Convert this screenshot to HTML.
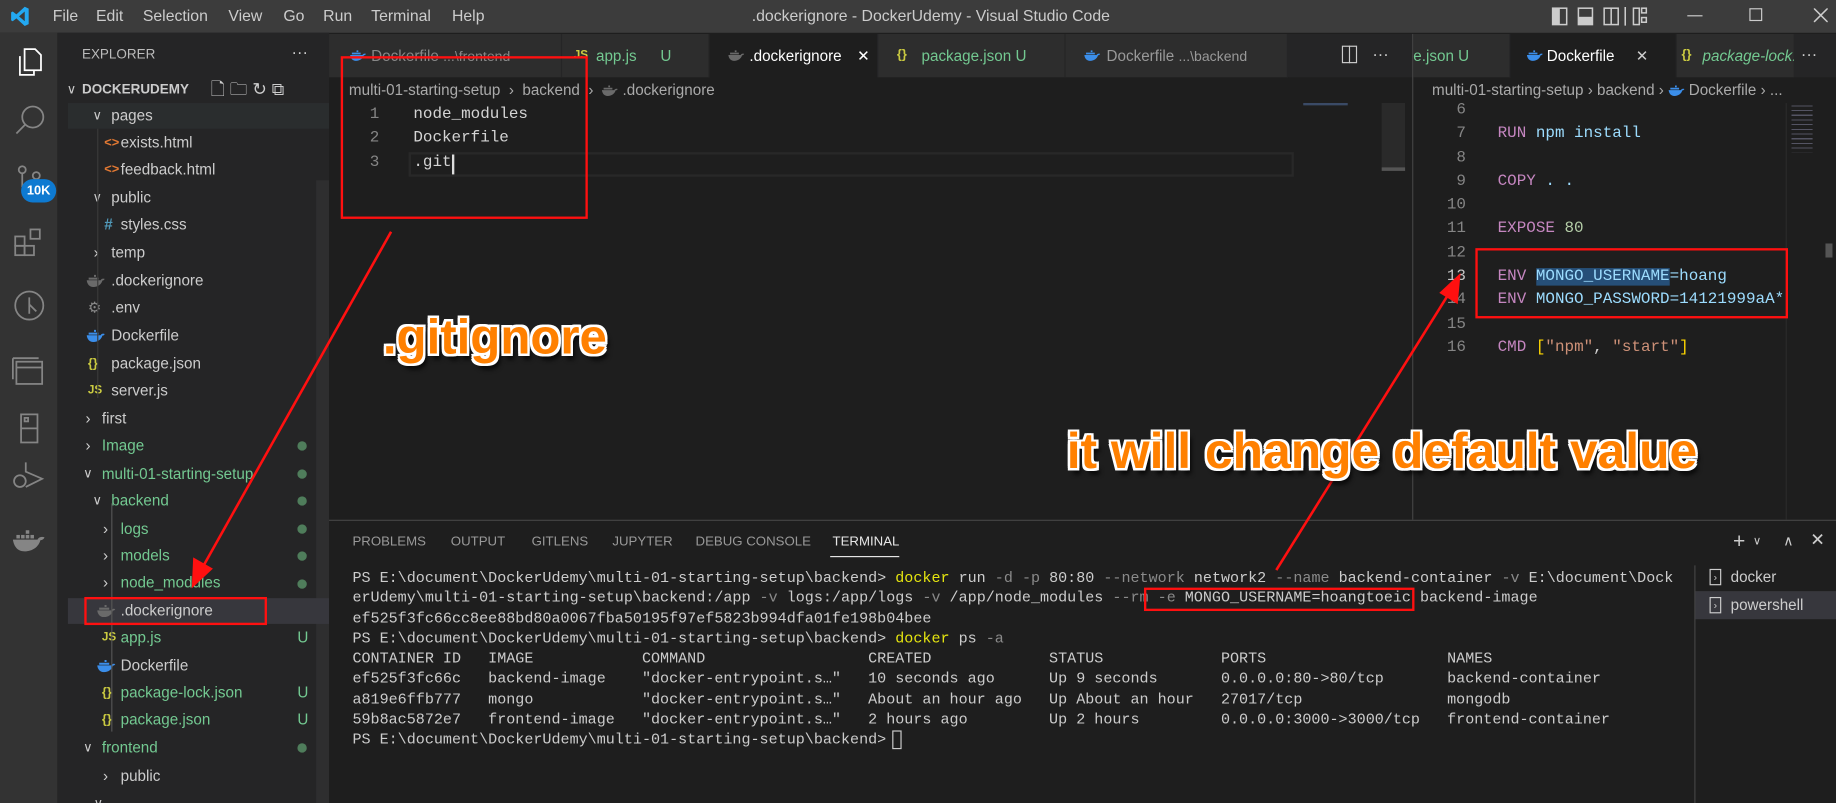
<!DOCTYPE html>
<html><head><meta charset="utf-8"><style>
*{margin:0;padding:0;box-sizing:border-box}
html,body{width:1836px;height:803px;overflow:hidden;background:#1e1e1e}
#w{position:absolute;left:0;top:0;width:1568px;height:686px;transform:scale(1.17092,1.17055);transform-origin:0 0;font-family:"Liberation Sans",sans-serif;color:#ccc;overflow:hidden;background:#1e1e1e}
.a{position:absolute;white-space:pre}
.sb .a{font-size:13px;line-height:22px}
.g{color:#73c991}
.dot{position:absolute;width:8px;height:8px;border-radius:50%;background:#4f7d5b}
.box{position:absolute;border:2.5px solid #ff1010}
.tab{position:absolute;top:29px;height:37px;background:#2d2d2d;border-right:1px solid #252526;font-size:13px;line-height:37px;white-space:nowrap;overflow:hidden}
.tab span{white-space:nowrap}
.code{font-family:"Liberation Mono",monospace;font-size:13.6px;line-height:20.3px}
.ln{color:#858585;text-align:right;width:30px}
.kw{color:#c586c0}.vr{color:#9cdcfe}.nm{color:#b5cea8}.st{color:#ce9178}.br{color:#ffd700}
.ann{position:absolute;font-family:"Liberation Sans",sans-serif;font-weight:bold;color:#ff8000;white-space:pre;
text-shadow:-2px -2px 0 #fff,2px -2px 0 #fff,-2px 2px 0 #fff,2px 2px 0 #fff,0 -2px 0 #fff,0 2px 0 #fff,-2px 0 0 #fff,2px 0 0 #fff,3px 5px 4px rgba(0,0,0,.8)}
.term{font-family:"Liberation Mono",monospace;font-size:12.88px;line-height:17.25px;color:#ccc}
.y{color:#e5e510}.d{color:#8a8a8a}
svg.wh{display:inline-block;vertical-align:middle}
</style></head><body><div id="w">

<!-- title bar -->
<div class="a" style="left:0;top:0;width:1568px;height:28px;background:#3c3c3c"></div>
<svg class="a" style="left:8px;top:5px" width="18" height="18" viewBox="0 0 24 24"><path fill="#23a9f2" d="M17.5 1 22 3.2v17.6L17.5 23 8 14.3 3.8 17.5 2 16.6V7.4l1.8-.9L8 9.7 17.5 1zM17.5 6.5 11 12l6.5 5.5z"/></svg>
<div class="a" style="left:45px;top:6px;font-size:13.5px">File</div>
<div class="a" style="left:82px;top:6px;font-size:13.5px">Edit</div>
<div class="a" style="left:122px;top:6px;font-size:13.5px">Selection</div>
<div class="a" style="left:195px;top:6px;font-size:13.5px">View</div>
<div class="a" style="left:242px;top:6px;font-size:13.5px">Go</div>
<div class="a" style="left:276px;top:6px;font-size:13.5px">Run</div>
<div class="a" style="left:317px;top:6px;font-size:13.5px">Terminal</div>
<div class="a" style="left:386px;top:6px;font-size:13.5px">Help</div>
<div class="a" style="left:642px;top:6px;font-size:13.5px">.dockerignore - DockerUdemy - Visual Studio Code</div>
<svg class="a" style="left:1320px;top:6px" width="110" height="16" viewBox="0 0 110 16" fill="none" stroke="#ccc" stroke-width="1.3"><rect x="6" y="1" width="12" height="14"/><rect x="6.5" y="1.5" width="5" height="13" fill="#ccc"/><rect x="28" y="1" width="12" height="14"/><rect x="28.5" y="9" width="11" height="5.5" fill="#ccc"/><rect x="50" y="1" width="12" height="14"/><line x1="56" y1="1" x2="56" y2="15"/><line x1="68" y1="0" x2="68" y2="16"/><rect x="75" y="1" width="5" height="14"/><rect x="82" y="1" width="4" height="4"/><rect x="82" y="9" width="4" height="4"/></svg>
<div class="a" style="left:1441px;top:13px;width:13px;height:1.3px;background:#ccc"></div>
<div class="a" style="left:1494px;top:7px;width:11px;height:11px;border:1.3px solid #ccc"></div>
<svg class="a" style="left:1549px;top:7px" width="12" height="12" viewBox="0 0 12 12" stroke="#ccc" stroke-width="1.3"><path d="M0 0 12 12M12 0 0 12"/></svg>

<!-- activity bar -->
<div class="a" style="left:0;top:28px;width:49px;height:658px;background:#333"></div>
<svg class="a" style="left:0;top:28px" width="49" height="460" viewBox="0 0 49 460" fill="none" stroke="#858585" stroke-width="1.5">
<g stroke="#fff"><path d="M17 20v16h12v-4"/><path d="M21 14h9l5 5v13H21z"/></g>
<circle cx="28" cy="72" r="9"/><path d="M21.5 78.5 14 86"/>
<circle cx="19" cy="117" r="3"/><circle cx="31" cy="122" r="3"/><path d="M19 120v12"/>
<rect x="13" y="182" width="8" height="8"/><rect x="21" y="182" width="8" height="8"/><rect x="13" y="174" width="8" height="8"/><rect x="26" y="168" width="8" height="8"/>
<circle cx="25" cy="233" r="12"/><path d="M25 226v14M25 232l6 6"/>
<rect x="14" y="281" width="22" height="19"/><path d="M11 278h22M11 278v18M14 286h22"/>
<rect x="18" y="326" width="14" height="24"/><path d="M18 338h14"/><rect x="21" y="329" width="3" height="3"/>
<path d="M22 367v8l14 6-14 7"/><circle cx="17" cy="383" r="5"/>
</svg>
<svg class="a" style="left:11px;top:452px" width="28" height="20" viewBox="0 0 28 20"><path fill="#858585" d="M0 9h21c1-2 3-3 6-2-.5 1.5-2 2.5-3.5 2.5C22 15 17 19 10 19 4 19 1 15 0 9z"/><g fill="#858585"><rect x="3" y="5" width="3" height="3"/><rect x="7" y="5" width="3" height="3"/><rect x="11" y="5" width="3" height="3"/><rect x="11" y="1" width="3" height="3"/><rect x="15" y="5" width="3" height="3"/></g></svg>
<div class="a" style="left:18px;top:153px;width:30px;height:20px;border-radius:10px;background:#0e7ad1;color:#fff;font-size:11px;font-weight:bold;text-align:center;line-height:20px">10K</div>

<!-- sidebar -->
<div class="sb">
<div class="a" style="left:49px;top:28px;width:232px;height:658px;background:#252526"></div>
<div class="a" style="left:270px;top:154px;width:11px;height:532px;background:#2e2e2f"></div>
<div class="a" style="left:70px;top:36px;font-size:11.5px;color:#bbb">EXPLORER</div>
<div class="a" style="left:249px;top:33px;font-size:14px;color:#ccc">···</div>
<div class="a" style="left:57px;top:66px;font-size:11px;color:#ccc">∨</div>
<div class="a" style="left:70px;top:66px;font-size:11.5px;font-weight:bold;color:#ccc">DOCKERUDEMY</div>
<div class="a" style="left:180px;top:66px;font-size:15px;color:#ccc">🗋 🗀 ↻ ⧉</div>
<div class="a" style="left:58px;top:88px;width:223px;height:22px;background:#2a2d2e"></div>
<div class="a" style="left:79px;top:88px;font-size:11px">∨</div><div class="a" style="left:95px;top:88px">pages</div>
<div class="a" style="left:89px;top:111px;color:#e37933;font-size:11px;font-weight:bold">&lt;&gt;</div><div class="a" style="left:103px;top:111px">exists.html</div>
<div class="a" style="left:89px;top:134px;color:#e37933;font-size:11px;font-weight:bold">&lt;&gt;</div><div class="a" style="left:103px;top:134px">feedback.html</div>
<div class="a" style="left:79px;top:158px;font-size:11px">∨</div><div class="a" style="left:95px;top:158px">public</div>
<div class="a" style="left:89px;top:181px;color:#519aba;font-weight:bold">#</div><div class="a" style="left:103px;top:181px">styles.css</div>
<div class="a" style="left:80px;top:205px">›</div><div class="a" style="left:95px;top:205px">temp</div>
<svg class="a" style="left:74px;top:234px" width="16" height="12" viewBox="0 0 28 20"><path fill="#6a6a6a" d="M0 9h21c1-2 3-3 6-2-.5 1.5-2 2.5-3.5 2.5C22 15 17 19 10 19 4 19 1 15 0 9zM3 5h15v3H3zM11 1h3v3h-3z"/></svg><div class="a" style="left:95px;top:229px">.dockerignore</div>
<div class="a" style="left:75px;top:252px;color:#8a8a8a">⚙</div><div class="a" style="left:95px;top:252px">.env</div>
<svg class="a" style="left:74px;top:281px" width="16" height="12" viewBox="0 0 28 20"><path fill="#3b8eea" d="M0 9h21c1-2 3-3 6-2-.5 1.5-2 2.5-3.5 2.5C22 15 17 19 10 19 4 19 1 15 0 9zM3 5h15v3H3zM11 1h3v3h-3z"/></svg><div class="a" style="left:95px;top:276px">Dockerfile</div>
<div class="a" style="left:75px;top:300px;color:#cbcb41;font-size:11px;font-weight:bold">{}</div><div class="a" style="left:95px;top:300px">package.json</div>
<div class="a" style="left:75px;top:323px;color:#cbcb41;font-size:10px;font-weight:bold">JS</div><div class="a" style="left:95px;top:323px">server.js</div>
<div class="a" style="left:73px;top:347px">›</div><div class="a" style="left:87px;top:347px">first</div>
<div class="a" style="left:73px;top:370px">›</div><div class="a g" style="left:87px;top:370px">Image</div><div class="dot" style="left:254px;top:377px"></div>
<div class="a" style="left:71px;top:394px;font-size:11px">∨</div><div class="a g" style="left:87px;top:394px">multi-01-starting-setup</div><div class="dot" style="left:254px;top:401px"></div>
<div class="a" style="left:79px;top:417px;font-size:11px">∨</div><div class="a g" style="left:95px;top:417px">backend</div><div class="dot" style="left:254px;top:424px"></div>
<div class="a" style="left:88px;top:441px">›</div><div class="a g" style="left:103px;top:441px">logs</div><div class="dot" style="left:254px;top:448px"></div>
<div class="a" style="left:88px;top:464px">›</div><div class="a g" style="left:103px;top:464px">models</div><div class="dot" style="left:254px;top:471px"></div>
<div class="a" style="left:88px;top:487px">›</div><div class="a g" style="left:103px;top:487px">node_modules</div><div class="dot" style="left:254px;top:495px"></div>
<div class="a" style="left:58px;top:511px;width:223px;height:22px;background:#37373d"></div>
<svg class="a" style="left:83px;top:516px" width="16" height="12" viewBox="0 0 28 20"><path fill="#6a6a6a" d="M0 9h21c1-2 3-3 6-2-.5 1.5-2 2.5-3.5 2.5C22 15 17 19 10 19 4 19 1 15 0 9zM3 5h15v3H3zM11 1h3v3h-3z"/></svg><div class="a" style="left:103px;top:511px">.dockerignore</div>
<div class="a" style="left:87px;top:534px;color:#cbcb41;font-size:10px;font-weight:bold">JS</div><div class="a g" style="left:103px;top:534px">app.js</div><div class="a g" style="left:254px;top:534px">U</div>
<svg class="a" style="left:83px;top:563px" width="16" height="12" viewBox="0 0 28 20"><path fill="#3b8eea" d="M0 9h21c1-2 3-3 6-2-.5 1.5-2 2.5-3.5 2.5C22 15 17 19 10 19 4 19 1 15 0 9zM3 5h15v3H3zM11 1h3v3h-3z"/></svg><div class="a" style="left:103px;top:558px">Dockerfile</div>
<div class="a" style="left:87px;top:581px;color:#cbcb41;font-size:11px;font-weight:bold">{}</div><div class="a g" style="left:103px;top:581px">package-lock.json</div><div class="a g" style="left:254px;top:581px">U</div>
<div class="a" style="left:87px;top:604px;color:#cbcb41;font-size:11px;font-weight:bold">{}</div><div class="a g" style="left:103px;top:604px">package.json</div><div class="a g" style="left:254px;top:604px">U</div>
<div class="a" style="left:71px;top:628px;font-size:11px">∨</div><div class="a g" style="left:87px;top:628px">frontend</div><div class="dot" style="left:254px;top:635px"></div>
<div class="a" style="left:88px;top:652px">›</div><div class="a" style="left:103px;top:652px">public</div>
<div class="a" style="left:80px;top:676px;font-size:11px">∨</div>
<div class="a" style="left:83px;top:110px;width:1px;height:230px;background:#3a3a3a"></div>
<div class="a" style="left:95px;top:430px;width:1px;height:195px;background:#555"></div>
</div>

<!-- editor group 1 -->
<div class="a" style="left:281px;top:29px;width:1287px;height:37px;background:#252526"></div>
<div class="tab" style="left:281px;width:199px"><svg class="a" style="left:18px;top:13px" width="14" height="11" viewBox="0 0 28 20"><path fill="#3b8eea" d="M0 9h21c1-2 3-3 6-2-.5 1.5-2 2.5-3.5 2.5C22 15 17 19 10 19 4 19 1 15 0 9zM3 5h15v3H3zM11 1h3v3h-3z"/></svg><span style="position:absolute;left:36px;color:#888">Dockerfile <span style="font-size:12px">...\frontend</span></span></div>
<div class="tab" style="left:480px;width:126px"><span style="position:absolute;left:10px;color:#cbcb41;font-size:10px;font-weight:bold">JS</span><span class="g" style="position:absolute;left:29px">app.js</span><span class="g" style="position:absolute;left:84px">U</span></div>
<div class="tab" style="left:606px;width:144px;background:#1e1e1e;color:#fff"><svg class="a" style="left:16px;top:13px" width="14" height="11" viewBox="0 0 28 20"><path fill="#6a6a6a" d="M0 9h21c1-2 3-3 6-2-.5 1.5-2 2.5-3.5 2.5C22 15 17 19 10 19 4 19 1 15 0 9zM3 5h15v3H3zM11 1h3v3h-3z"/></svg><span style="position:absolute;left:34px">.dockerignore</span><span style="position:absolute;left:126px">✕</span></div>
<div class="tab" style="left:750px;width:160px"><span style="position:absolute;left:16px;color:#cbcb41;font-size:11px;font-weight:bold">{}</span><span class="g" style="position:absolute;left:37px">package.json U</span></div>
<div class="tab" style="left:910px;width:190px"><svg class="a" style="left:16px;top:13px" width="14" height="11" viewBox="0 0 28 20"><path fill="#3b8eea" d="M0 9h21c1-2 3-3 6-2-.5 1.5-2 2.5-3.5 2.5C22 15 17 19 10 19 4 19 1 15 0 9zM3 5h15v3H3zM11 1h3v3h-3z"/></svg><span style="position:absolute;left:35px;color:#999">Dockerfile <span style="font-size:12px">...\backend</span></span></div>
<div class="a" style="left:1146px;top:39px;width:13px;height:15px;border:1.3px solid #ccc"></div><div class="a" style="left:1152px;top:39px;width:1.3px;height:15px;background:#ccc"></div>
<div class="a" style="left:1172px;top:38px;font-size:14px">···</div>
<div class="a" style="left:298px;top:69px;font-size:13px;color:#aaa">multi-01-starting-setup  ›  backend  ›  <svg class="wh" width="14" height="11" viewBox="0 0 28 20"><path fill="#6a6a6a" d="M0 9h21c1-2 3-3 6-2-.5 1.5-2 2.5-3.5 2.5C22 15 17 19 10 19 4 19 1 15 0 9zM3 5h15v3H3zM11 1h3v3h-3z"/></svg> .dockerignore</div>
<div class="a code ln" style="left:294px;top:89px;line-height:20.4px">1
2
3</div>
<div class="a" style="left:349px;top:130px;width:756px;height:21px;border:2px solid #282828"></div>
<div class="a code" style="left:353px;top:89px;color:#d4d4d4;line-height:20.4px">node_modules
Dockerfile
.git</div>
<div class="a" style="left:386px;top:132px;width:1.5px;height:17px;background:#ddd"></div>
<div class="a" style="left:1113px;top:88px;width:38px;height:2px;background:#3a4a66"></div>
<div class="a" style="left:1180px;top:88px;width:20px;height:56px;background:#2a2a2a"></div>
<div class="a" style="left:1180px;top:143px;width:20px;height:3px;background:#555"></div>

<!-- editor group 2 -->
<div class="a" style="left:1206px;top:29px;width:1px;height:415px;background:#444"></div>
<div class="tab" style="left:1207px;width:83px"><span class="g" style="position:absolute;left:0">e.json U</span></div>
<div class="tab" style="left:1290px;width:142px;background:#1e1e1e;color:#fff"><svg class="a" style="left:14px;top:13px" width="14" height="11" viewBox="0 0 28 20"><path fill="#3b8eea" d="M0 9h21c1-2 3-3 6-2-.5 1.5-2 2.5-3.5 2.5C22 15 17 19 10 19 4 19 1 15 0 9zM3 5h15v3H3zM11 1h3v3h-3z"/></svg><span style="position:absolute;left:31px">Dockerfile</span><span style="position:absolute;left:107px;color:#ccc">✕</span></div>
<div class="tab" style="left:1432px;width:100px;border:0"><span style="position:absolute;left:4px;color:#cbcb41;font-size:11px;font-weight:bold">{}</span><span class="g" style="position:absolute;left:22px;font-style:italic">package-lock.j</span></div>
<div class="a" style="left:1532px;top:29px;width:36px;height:37px;background:#252526"></div>
<div class="a" style="left:1538px;top:38px;font-size:14px">···</div>
<div class="a" style="left:1223px;top:69px;font-size:13px;color:#aaa">multi-01-starting-setup › backend › <svg class="wh" width="14" height="11" viewBox="0 0 28 20"><path fill="#3b8eea" d="M0 9h21c1-2 3-3 6-2-.5 1.5-2 2.5-3.5 2.5C22 15 17 19 10 19 4 19 1 15 0 9zM3 5h15v3H3zM11 1h3v3h-3z"/></svg> Dockerfile › ...</div>
<div class="a" style="left:1207px;top:88px;width:361px;height:356px;overflow:hidden">
<div class="a code ln" style="left:15px;top:-3px">6
7
8
9
10
11
12
<span style="color:#c6c6c6">13</span>
14
15
16</div>
<div class="a code" style="left:72px;top:-3px;color:#d4d4d4"> 
<span class="kw">RUN</span> <span class="vr">npm install</span>

<span class="kw">COPY</span> <span class="vr">. .</span>

<span class="kw">EXPOSE</span> <span class="nm">80</span>

<span class="kw">ENV</span> <span class="vr" style="background:#264f78">MONGO_USERNAME</span><span class="vr">=hoang</span>
<span class="kw">ENV</span> <span class="vr">MONGO_PASSWORD=14121999aA*</span>

<span class="kw">CMD</span> <span class="br">[</span><span class="st">"npm"</span>, <span class="st">"start"</span><span class="br">]</span></div>
<div class="a" style="left:318px;top:0;width:1px;height:356px;background:#2a2a2a"></div>
<div class="a" style="left:323px;top:2px;width:18px;height:40px;opacity:.5;background:repeating-linear-gradient(#8a8aa8 0 1px,transparent 1px 4px)"></div>
<div class="a" style="left:352px;top:120px;width:6px;height:12px;background:#555"></div>
</div>

<!-- panel -->
<div class="a" style="left:281px;top:444px;width:1287px;height:242px;background:#1e1e1e;border-top:1px solid #444"></div>
<div class="a" style="left:301px;top:457px;font-size:11.3px;color:#999">PROBLEMS</div>
<div class="a" style="left:385px;top:457px;font-size:11.3px;color:#999">OUTPUT</div>
<div class="a" style="left:454px;top:457px;font-size:11.3px;color:#999">GITLENS</div>
<div class="a" style="left:523px;top:457px;font-size:11.3px;color:#999">JUPYTER</div>
<div class="a" style="left:594px;top:457px;font-size:11.3px;color:#999">DEBUG CONSOLE</div>
<div class="a" style="left:711px;top:457px;font-size:11.3px;color:#e7e7e7">TERMINAL</div>
<div class="a" style="left:709px;top:475px;width:59px;height:1px;background:#e7e7e7"></div>
<div class="a" style="left:1480px;top:452px;font-size:18px;color:#ccc">+</div>
<div class="a" style="left:1497px;top:457px;font-size:10px;color:#ccc">∨</div>
<div class="a" style="left:1523px;top:455px;font-size:12px;color:#ccc">∧</div>
<div class="a" style="left:1546px;top:452px;font-size:15px;color:#ccc">✕</div>
<div class="a term" style="left:301px;top:485px">PS E:\document\DockerUdemy\multi-01-starting-setup\backend> <span class="y">docker</span> run <span class="d">-d</span> <span class="d">-p</span> 80:80 <span class="d">--network</span> network2 <span class="d">--name</span> backend-container <span class="d">-v</span> E:\document\Dock
erUdemy\multi-01-starting-setup\backend:/app <span class="d">-v</span> logs:/app/logs <span class="d">-v</span> /app/node_modules <span class="d">--rm</span> <span class="d">-e</span> MONGO_USERNAME=hoangtoeic backend-image
ef525f3fc66cc8ee88bd80a0067fba50195f97ef5823b994dfa01fe198b04bee
PS E:\document\DockerUdemy\multi-01-starting-setup\backend> <span class="y">docker</span> ps <span class="d">-a</span>
CONTAINER ID   IMAGE            COMMAND                  CREATED             STATUS             PORTS                    NAMES
ef525f3fc66c   backend-image    "docker-entrypoint.s…"   10 seconds ago      Up 9 seconds       0.0.0.0:80->80/tcp       backend-container
a819e6ffb777   mongo            "docker-entrypoint.s…"   About an hour ago   Up About an hour   27017/tcp                mongodb
59b8ac5872e7   frontend-image   "docker-entrypoint.s…"   2 hours ago         Up 2 hours         0.0.0.0:3000->3000/tcp   frontend-container
PS E:\document\DockerUdemy\multi-01-starting-setup\backend> </div>
<div class="a" style="left:762px;top:624px;width:8px;height:16px;border:1px solid #ccc"></div>
<div class="a" style="left:1447px;top:483px;width:1px;height:203px;background:#444"></div>
<div class="a" style="left:1448px;top:505px;width:120px;height:24px;background:#37373d"></div>
<div class="a" style="left:1460px;top:486px;width:10px;height:14px;border:1px solid #ccc;font-size:9px;line-height:12px;text-align:center">›</div>
<div class="a" style="left:1478px;top:485px;font-size:13px">docker</div>
<div class="a" style="left:1460px;top:510px;width:10px;height:14px;border:1px solid #ccc;font-size:9px;line-height:12px;text-align:center">›</div>
<div class="a" style="left:1478px;top:509px;font-size:13px">powershell</div>

<!-- annotations -->
<div class="box" style="left:291px;top:48px;width:211px;height:139px"></div>
<div class="box" style="left:1260px;top:212px;width:267px;height:60px"></div>
<div class="box" style="left:977px;top:502px;width:231px;height:20px"></div>
<div class="box" style="left:72px;top:510px;width:156px;height:24px"></div>
<svg class="a" style="left:0;top:0" width="1568" height="686">
<g stroke="#ff1010" stroke-width="2.2" fill="#ff1010">
<line x1="334" y1="198" x2="170" y2="490"/>
<polygon points="165,500 166,478 180,486"/>
<line x1="1090" y1="487" x2="1241" y2="245"/>
<polygon points="1246,236 1244,258 1231,250"/>
</g></svg>
<div class="ann" style="left:327px;top:264px;font-size:42px">.gitignore</div>
<div class="ann" style="left:911px;top:363px;font-size:42.5px">it will change default value</div>

</div></body></html>
